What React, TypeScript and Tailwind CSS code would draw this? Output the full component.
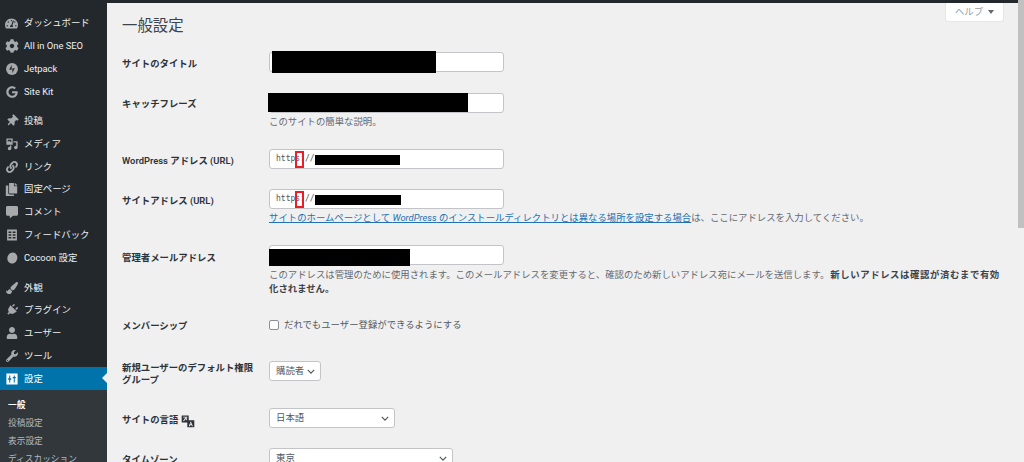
import React from "react";
import {
  FaTachometerAlt, FaCog, FaThumbtack, FaLink, FaCommentAlt, FaPaintBrush, FaPlug, FaUser, FaWrench, FaGoogle, FaCopy,
} from "react-icons/fa";

const Svg = ({ children }: { children: React.ReactNode }) => (
  <svg viewBox="0 0 20 20" width="14" height="14" fill="currentColor">{children}</svg>
);

const Jetpack = () => (
  <Svg><circle cx="10" cy="10" r="8.5" /><path d="M9.5 4v7H6zM10.5 16V9H14z" fill="#23282d" /></Svg>
);
const Media = () => (
  <Svg>
    <path d="M2 2h9v9H2zM4 4v3l2-1.500 3 2.500V4z" fillRule="evenodd" />
    <path d="M12 6h6v9a2.500 2.500 0 1 1-2-2.400V8h-4zM9 12v4.500A2.500 2.500 0 1 1 7 14v-2z" />
  </Svg>
);
const Feedback = () => (
  <Svg><path fillRule="evenodd" d="M3 2h14v16H3zM5 5v2h4V5zM11 5v2h4V5zM5 9v2h4V9zM11 9v2h4V9zM5 13v2h4v-2zM11 13v2h4v-2z" /></Svg>
);
const Cocoon = () => (
  <Svg><ellipse cx="10.500" cy="10" rx="7" ry="8" transform="rotate(20 10.500 10)" /></Svg>
);
const Settings = () => (
  <Svg><path fillRule="evenodd" d="M2 2h16v16H2zM6 5v4H4.500v2H6v4h1.500v-4H9V9H7.500V5zM12.500 5v2H11v2h1.500v6H14V9h1.500V7H14V5z" /></Svg>
);
const Translate = () => (
  <svg viewBox="0 0 20 20" width="14" height="14" className="ml-[3px] mt-[2px]" fill="#2c3338">
    <path fillRule="evenodd" d="M1 2h10v10H1zM3 4v1h3.500L3 9.500l1 1L7 7l1 2 1-.5L8 6V5h1V4z" />
    <path fillRule="evenodd" d="M9 9h10v10H9zM14 10.500l-3 7h1.500l.6-1.500h2l.6 1.500H17zM13.500 14.800l.6-1.800.6 1.800z" />
  </svg>
);

type Item = { label: string; icon: React.ReactNode; mt?: string };
const I = (C: React.ComponentType<{ size?: number }>, size = 13) => <C size={size} />;

const items: Item[] = [
  { label: "ダッシュボード", icon: I(FaTachometerAlt), mt: "mt-[9px]" },
  { label: "All in One SEO", icon: I(FaCog, 14) },
  { label: "Jetpack", icon: <Jetpack /> },
  { label: "Site Kit", icon: I(FaGoogle, 12) },
  { label: "投稿", icon: <span className="rotate-45 flex">{I(FaThumbtack, 12)}</span>, mt: "mt-[6.500px]" },
  { label: "メディア", icon: <Media /> },
  { label: "リンク", icon: I(FaLink, 12) },
  { label: "固定ページ", icon: I(FaCopy, 13) },
  { label: "コメント", icon: I(FaCommentAlt, 12) },
  { label: "フィードバック", icon: <Feedback /> },
  { label: "Cocoon 設定", icon: <Cocoon /> },
  { label: "外観", icon: I(FaPaintBrush, 12), mt: "mt-[7px]" },
  { label: "プラグイン", icon: <span className="rotate-45 flex">{I(FaPlug, 12)}</span> },
  { label: "ユーザー", icon: I(FaUser, 12) },
  { label: "ツール", icon: I(FaWrench, 12) },
];

const Sidebar = () => (
  <aside className="w-[107px] shrink-0 bg-[#23282d] text-[#eef0f1] text-[9.4px] flex flex-col">
    {items.map((it) => (
      <div key={it.label} className={`h-[22.8px] flex items-center shrink-0 ${it.mt ?? ""}`}>
        <span className="w-6 flex justify-center pr-[1px] text-[#a7aaad] shrink-0">{it.icon}</span>
        <span className="whitespace-nowrap">{it.label}</span>
      </div>
    ))}
    <div className="relative h-[22.8px] shrink-0 flex items-center bg-[#0073aa] text-white">
      <span className="w-6 flex justify-center pr-[1px] shrink-0"><Settings /></span>
      <span>設定</span>
      <span className="absolute right-0 top-[6px] border-y-[5px] border-y-transparent border-r-[5px] border-r-[#f0f0f1]" />
    </div>
    <div className="flex-1 bg-[#32373c] text-[#b4b9be] text-[8.7px] pt-[6px] pl-2">
      <div className="h-[18.200px] flex items-center font-bold text-white">一般</div>
      <div className="h-[18.200px] flex items-center">投稿設定</div>
      <div className="h-[18.200px] flex items-center">表示設定</div>
      <div className="h-[18.200px] flex items-center whitespace-nowrap">ディスカッション</div>
    </div>
  </aside>
);

const Chevron = () => (
  <svg viewBox="0 0 10 6" width="8" height="5" fill="none" stroke="#50575e" strokeWidth="1.500"><path d="M1 1l4 4 4-4" /></svg>
);

const Input = ({ children }: { children?: React.ReactNode }) => (
  <div className="relative w-[235px] h-5 bg-white border border-[#c3c4c7] rounded-[3px] flex items-center pl-[6px] font-['DejaVu_Sans_Mono',monospace] text-[8px] text-[#50575e]">
    {children}
  </div>
);

const Select = ({ w, text }: { w: string; text: string }) => (
  <div className={`${w} h-5 bg-white border border-[#c3c4c7] rounded-[3px] flex items-center justify-between pl-[6px] pr-[5px] text-[#50575e]`}>
    <span>{text}</span><Chevron />
  </div>
);

const Url = ({ bar }: { bar: string }) => (
  <Input>
    https://
    <span className="absolute left-[25px] top-[1px] w-[9px] h-[17px] border-2 border-[#ee1c25]" />
    <span className={`absolute left-[45px] top-[5px] h-[10px] bg-black ${bar}`} />
  </Input>
);

const Row = ({ label, mt = "mt-0", pt, children, h }: { label: React.ReactNode; mt?: string; pt: string; h: string; children: React.ReactNode }) => (
  <div className={`flex ${mt} ${h}`}>
    <div className={`w-[147px] shrink-0 pr-[10px] font-semibold text-[#2c3338] leading-[12px] ${pt}`}>{label}</div>
    <div className="flex-1 min-w-0">{children}</div>
  </div>
);

const Desc = ({ children, mt = "mt-[2px]" }: { children: React.ReactNode; mt?: string }) => (
  <p className={`${mt} text-[#646970] leading-[14px]`}>{children}</p>
);

export default function App() {
  return (
    <div className="h-[462px] w-[1024px] overflow-hidden flex bg-[#f0f0f1] font-['Roboto','Noto_Sans_CJK_JP',sans-serif] text-[9.4px]">
      <div className="flex-1 min-w-0 flex flex-col">
        <div className="h-[3px] shrink-0 bg-[#23282d]" />
        <div className="flex-1 min-h-0 flex">
          <Sidebar />
          <main className="relative flex-1 min-w-0 pl-[15px] pr-[14px] text-[#3c434a]">
            <div className="absolute right-[14px] top-0 w-[59px] h-[19px] bg-white border border-t-0 border-[#e6e6e6] rounded-b-[3px] flex items-center justify-center gap-[5px] text-[#9a9ea3]">
              ヘルプ
              <span className="border-x-[3px] border-x-transparent border-t-[4px] border-t-[#646970]" />
            </div>
            <h1 className="text-[15.400px] font-normal text-[#3c434a] leading-[20px] mt-[13px]">一般設定</h1>

            <Row label="サイトのタイトル" mt="mt-[16px]" pt="pt-[6px]" h="h-[41px]">
              <Input>
                <span className="absolute left-[2px] -top-[2px] w-[164px] h-[22px] bg-black" />
              </Input>
            </Row>
            <Row label="キャッチフレーズ" pt="pt-[5px]" h="h-[56px]">
              <Input>
                <span className="absolute -left-[2px] -top-[1px] w-[200px] h-[19px] bg-black" />
              </Input>
              <Desc>このサイトの簡単な説明。</Desc>
            </Row>
            <Row label="WordPress アドレス (URL)" pt="pt-[6px]" h="h-[40px]">
              <Url bar="w-[85px]" />
            </Row>
            <Row label="サイトアドレス (URL)" pt="pt-[6px]" h="h-[56px]">
              <Url bar="w-[86px]" />
              <Desc>
                <a className="text-[#2271b1] underline">サイトのホームページとして <em>WordPress</em> のインストールディレクトリとは異なる場所を設定する場合</a>は、ここにアドレスを入力してください。
              </Desc>
            </Row>
            <Row label="管理者メールアドレス" pt="pt-[7px]" h="h-[74px]">
              <Input>
                <span className="absolute -left-[1px] top-[3px] w-[141px] h-[17px] bg-black" />
              </Input>
              <Desc mt="mt-[3px]">
                このアドレスは管理のために使用されます。このメールアドレスを変更すると、確認のため新しいアドレス宛にメールを送信します。<strong className="font-semibold text-[#3c434a] tracking-[0.6px] ml-[1px]">新しいアドレスは確認が済むまで有効</strong><br />
                <strong className="font-semibold text-[#3c434a]">化されません。</strong>
              </Desc>
            </Row>
            <Row label="メンバーシップ" pt="pt-[1px]" h="h-[42px]">
              <div className="flex items-center gap-[5px] h-[12px] text-[#50575e]">
                <span className="w-[10px] h-[10px] bg-white border border-[#8c8f94] rounded-[2px]" />
                だれでもユーザー登録ができるようにする
              </div>
            </Row>
            <Row label="新規ユーザーのデフォルト権限グループ" pt="pt-[1px]" h="h-[47px]">
              <Select w="w-[52px]" text="購読者" />
            </Row>
            <Row label={<span className="flex items-center">サイトの言語<Translate /></span>} pt="pt-[4px]" h="h-[40px]">
              <Select w="w-[126px]" text="日本語" />
            </Row>
            <Row label="タイムゾーン" pt="pt-[6px]" h="h-[20px]">
              <Select w="w-[184px]" text="東京" />
            </Row>
          </main>
        </div>
      </div>
      <div className="w-[6px] shrink-0 bg-[#f1f1f1]">
        <div className="h-[228px] bg-[#c1c1c1]" />
      </div>
    </div>
  );
}
